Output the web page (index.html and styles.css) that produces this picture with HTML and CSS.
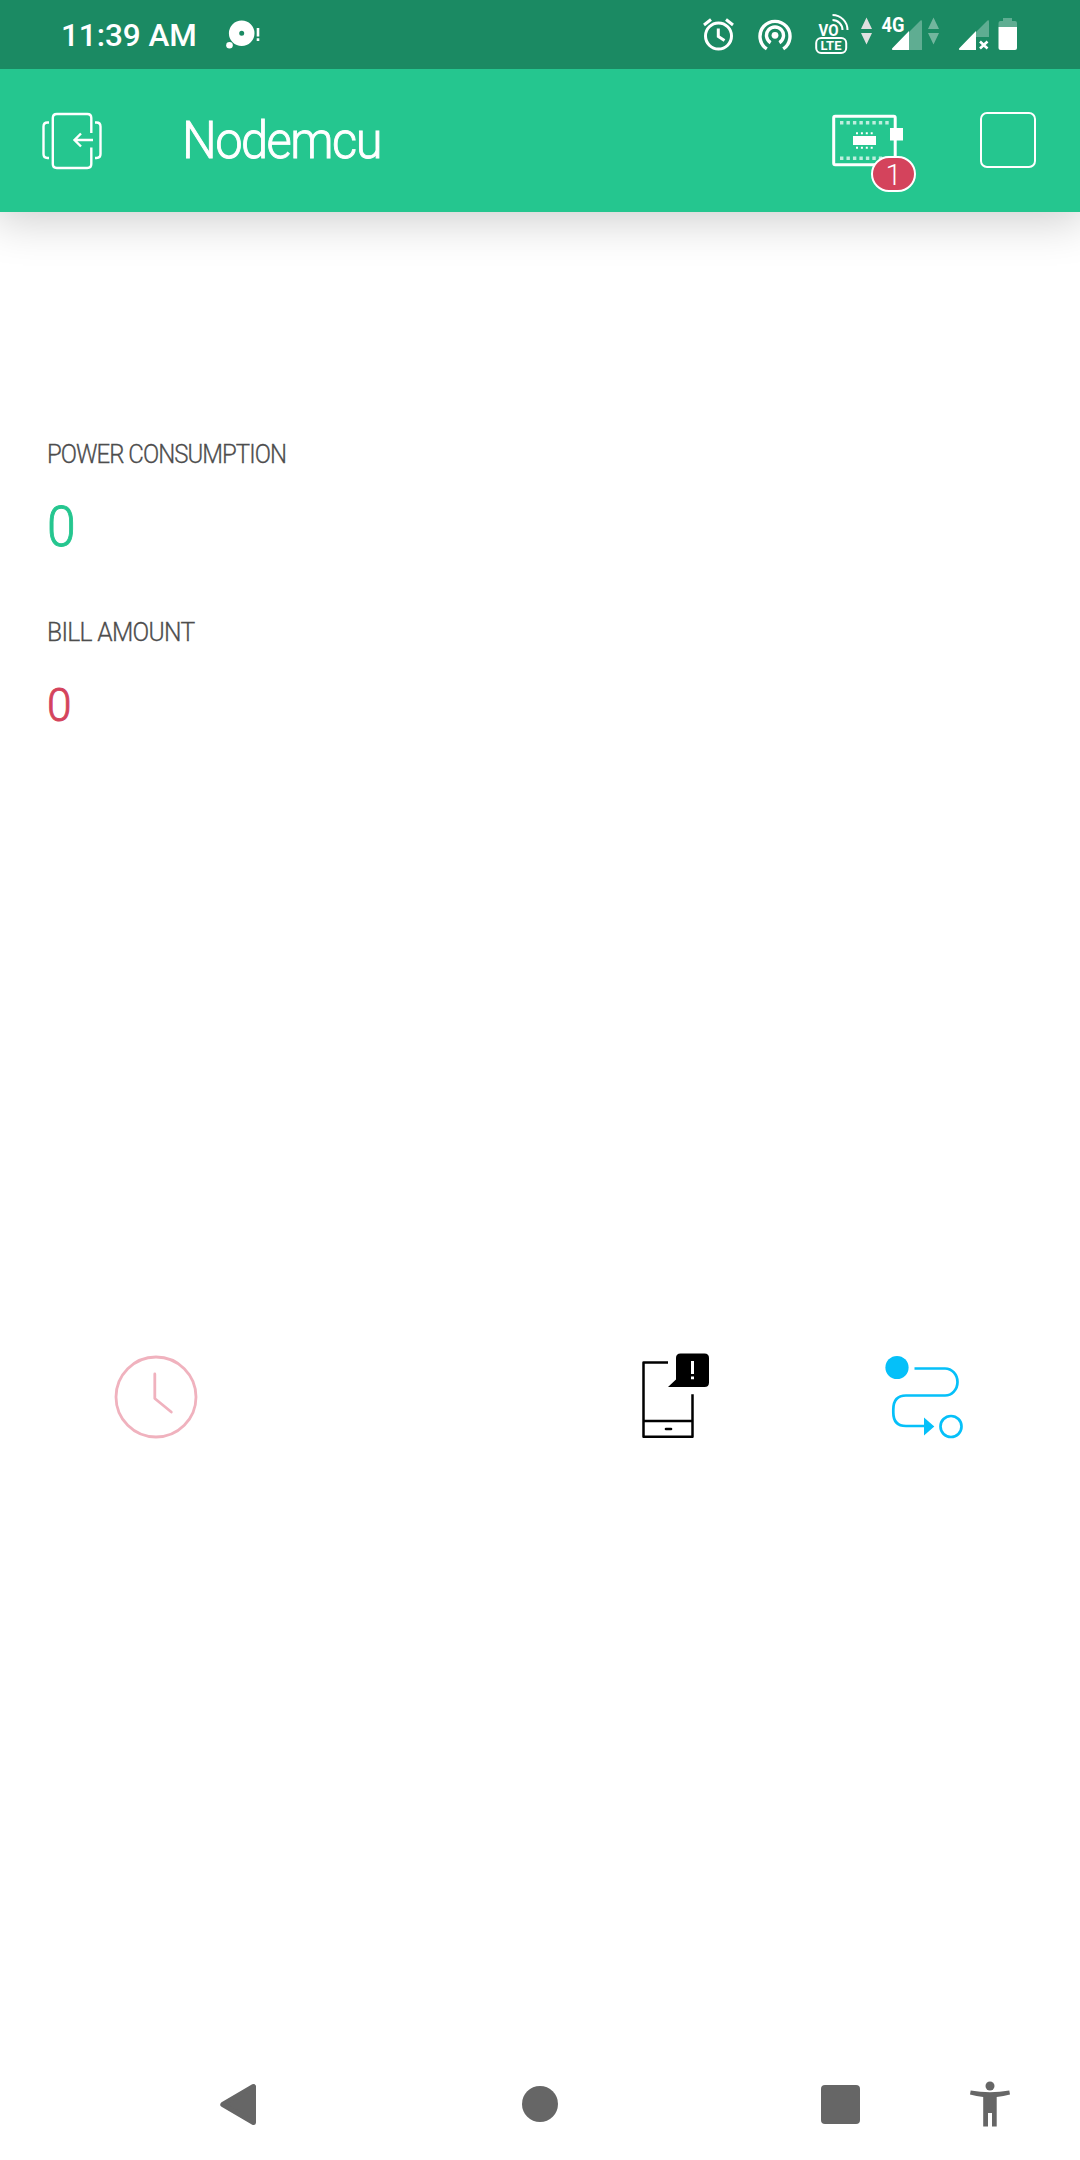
FILE: index.html
```html
<!DOCTYPE html>
<html lang="en">
<head>
<meta charset="utf-8">
<title>Nodemcu</title>
<link rel="stylesheet" href="styles.css">
</head>
<body>
<div class="screen">
  <div class="status">
    <span class="clock">11:39 AM</span>
    <svg class="notice" width="38" height="69" viewBox="224 0 38 69" fill="#fff"><path fill-rule="evenodd" d="M241.7 20.5a12.8 12.8 0 1 1 0 25.6a12.8 12.8 0 0 1 0-25.6m0 10.3a2.5 2.5 0 1 0 0 5a2.5 2.5 0 0 0 0-5"/><circle cx="229.5" cy="45.3" r="3.3"/><path d="M256.7 28h2.6v8.5h-2.6zM256.7 38.3h2.6v2.7h-2.6z"/></svg>
    <div class="indicators">
      <svg width="40" height="69" viewBox="700 0 40 69" fill="none" stroke="#fff" stroke-width="3"><circle cx="718.5" cy="36" r="13"/><path d="M704 25l7-5.5M733 25l-7-5.5M718.3 28.5v8l6.2 4"/></svg>
      <svg width="40" height="69" viewBox="755 0 40 69" fill="none" stroke="#fff" stroke-width="3.4"><circle cx="775" cy="35.3" r="3.4" fill="#fff" stroke="none"/><path d="M766.8 48.9a15 15 0 1 1 16.4 0M770.6 42.7a8.5 8.5 0 1 1 8.8 0"/></svg>
      <svg width="40" height="69" viewBox="812 0 40 69" fill="none" stroke="#fff" stroke-width="2"><rect x="816.2" y="38" width="30" height="15" rx="5"/><path d="M832.5 15a15 15 0 0 1 15 15M832.5 20a10 10 0 0 1 10 10"/><text class="vo" x="818.5" y="35.5" textLength="20" lengthAdjust="spacingAndGlyphs">VO</text><text class="lte" x="820.5" y="50.2" textLength="21">LTE</text></svg>
      <svg class="data" width="14" height="69" viewBox="860 0 14 69" fill="#e0e0e0"><path d="M861 29l5.5-11.5L872 29zM861 33h11l-5.5 11.5z"/></svg>
      <svg class="signal" width="44" height="69" viewBox="880 0 44 69" fill="#fff"><path opacity=".3" d="M909 32l11.5-11.5q1.5-.8 1.5 1V50h-13z"/><path d="M909 31v19h-16q-2-.5-.5-2z"/><text class="net" x="881.5" y="32" textLength="23" lengthAdjust="spacingAndGlyphs">4G</text></svg>
      <svg class="idle" width="14" height="69" viewBox="927 0 14 69" fill="#fff" opacity=".38"><path d="M928 29l5.5-11.5L939 29zM928 33h11l-5.5 11.5z"/></svg>
      <svg class="signal2" width="34" height="69" viewBox="957 0 34 69" fill="#fff"><path opacity=".3" d="M976 32l11.5-11.5q1.5-.8 1.5 1V37h-13z"/><path d="M976 31v19h-16q-2-.5-.5-2z"/><path d="M980 41.5l7.5 7M987.5 41.5l-7.5 7" stroke="#fff" stroke-width="2.6"/></svg>
      <svg class="battery" width="24" height="69" viewBox="996 0 24 69" fill="#fff"><path opacity=".3" d="M998.5 27v-4q0-2 2-2h2.500v-3h9v3h3q2 0 2 2v4z"/><path d="M998.5 27h18.5v21q0 2-2 2h-14.500q-2 0-2-2z"/></svg>
    </div>
  </div>

  <header class="bar">
    <svg class="back" width="64" height="143" viewBox="40 69 64 143" fill="none" stroke="#fff" stroke-width="2.4"><path d="M91.3 133V118q0-4-4-4H56.8q-4 0-4 4v46q0 4 4 4h30.5q4 0 4-4v-16.500M93 140H74.5M81 133.500l-6.500 6.500l6.500 6.500M49 122.500h-1.500q-4 0-4 4V154q0 4 4 4H49M95 122.500h1.500q4 0 4 4V154q0 4-4 4H95"/></svg>
    <h1 class="title">Nodemcu</h1>
    <div class="device">
      <svg width="76" height="143" viewBox="830 69 76 143" fill="#fff"><rect x="833.7" y="116.2" width="61.5" height="48.5" rx="1.5" fill="none" stroke="#fff" stroke-width="3"/><path d="M840 122.7h50M840 158.3h50" fill="none" stroke="#fff" opacity=".7" stroke-width="3.4" stroke-dasharray="3.4 3.07"/><path d="M853 136h23v9h-23zM890 128h13v12.5h-13z"/><path d="M856 133.3h18M856 147.7h18" fill="none" stroke="#fff" stroke-width="2" stroke-dasharray="2 2.9"/></svg>
      <span class="badge">1</span>
    </div>
    <span class="stop"></span>
  </header>

  <main class="board">
    <section class="metric power"><h2>POWER CONSUMPTION</h2><p class="value">0</p></section>
    <section class="metric bill"><h2>BILL AMOUNT</h2><p class="value">0</p></section>
    <div class="widgets">
      <svg width="86" height="90" viewBox="113 1350 86 90" fill="none" stroke="#f0b2be" stroke-width="2.8"><circle cx="156" cy="1397" r="40"/><path stroke-linecap="round" stroke-linejoin="round" d="M154.8 1374v24.500l16.500 13.500"/></svg>
      <svg class="alert" width="72" height="90" viewBox="640 1350 72 90"><path d="M668 1362.500h-24.500v74.300h49v-42.500M643.500 1421h49" fill="none" stroke="#000" stroke-width="2.500" stroke-linejoin="round"/><path d="M666 1429h5" stroke="#000" stroke-width="2.600" stroke-linecap="round"/><path d="M668 1387l8-7.500V1358q0-4.500 4.500-4.500H704.500q4.500 0 4.500 4.500v24.500q0 4.500-4.500 4.500z"/><path d="M691 1361h3v13h-3zM691 1376.500h3v2.800h-3z" fill="#fff"/></svg>
      <svg class="route" width="84" height="90" viewBox="882 1350 84 90" fill="none" stroke="#05c0f9" stroke-width="2.700"><circle cx="897" cy="1367.500" r="11.600" fill="#05c0f9" stroke="none"/><path d="M914.500 1368.500h30.500a12.500 13.500 0 0 1 0 27H906q-12.700 0-12.700 14v3q0 13.500 12.700 13.500h20"/><path d="M924 1417.500l10.300 9-10.300 9z" fill="#05c0f9" stroke="none"/><circle cx="951" cy="1426.500" r="10.500"/></svg>
    </div>
  </main>

  <nav class="nav">
    <svg width="38" height="112" viewBox="219 2048 38 112"><path d="M222.8 2104.500l30.700-18v36z" stroke="#666" stroke-width="5" stroke-linejoin="round" fill="#666"/></svg>
    <span class="home"></span>
    <span class="recent"></span>
    <svg class="access" width="42" height="112" viewBox="969 2048 42 112" fill="#666"><circle cx="990" cy="2086" r="4.500"/><path d="M970.700 2090.500q19.300 3.500 38.600 0l.7 4q-6.500 1.800-13.300 2.500v29.500h-4.700V2113h-4v13.500h-4.800V2097q-6.700-.7-13.200-2.500z"/></svg>
  </nav>
</div>
</body>
</html>
```
FILE: styles.css
```css
* { box-sizing: border-box; margin: 0; padding: 0; }
body { background: #fff; font-family: Roboto, sans-serif; }
svg { display: block; flex: none; }
.screen { width: 1080px; height: 2160px; display: flex; flex-direction: column; overflow: hidden; }

.status { height: 69px; background: #1b8a63; display: flex; align-items: center; padding: 0 60px 0 61px; }
.clock { width: 138px; color: #fff; font-size: 31.5px; font-weight: 500; line-height: 73px; letter-spacing: -.05px; white-space: nowrap; margin-top: 2px; }
.notice { margin-left: 25px; }
.indicators { display: flex; margin-left: auto; }
.indicators svg + svg { margin-left: 15px; }
.indicators svg:nth-child(3) { margin-left: 17px; }
.indicators svg.data { margin-left: 8px; }
.indicators svg.signal { margin-left: 6px; }
.indicators svg.idle { margin-left: 3px; }
.indicators svg.signal2 { margin-left: 16px; }
.indicators svg.battery { margin-left: 5px; }
.indicators text { fill: #fff; stroke: none; font-weight: 700; }
.vo { font-size: 16.5px; }
.lte { font-size: 13px; }
.net { font-size: 21px; }

.bar { height: 143px; background: #25c68f; display: flex; align-items: center; padding: 0 44px 0 40px; box-shadow: 0 2px 44px 6px rgba(0, 0, 0, .2); clip-path: inset(0 0 -60px 0); }
.title { width: 200px; margin-left: 78px; color: #fff; font-size: 52px; font-weight: 300; line-height: 143px; letter-spacing: -1.6px; transform: scaleX(.938); transform-origin: 0 0; -webkit-text-stroke: .9px #fff; }
.device { position: relative; margin-left: auto; margin-right: 74px; }
.badge { position: absolute; left: 41px; top: 87px; width: 45px; height: 36px; border: 2px solid #fff; border-radius: 18px; background: #d4435c; color: #fff; font-size: 29px; font-weight: 300; line-height: 34px; text-align: center; }
.stop { width: 56px; height: 56px; margin-top: -1px; border: 2px solid #fff; border-radius: 7px; }

.board { flex: 1; }
.metric { padding-left: 47px; }
.metric h2 { width: 300px; color: #4d4d4d; font-size: 25px; font-weight: 300; line-height: 30px; letter-spacing: -1px; transform: scaleX(.958); transform-origin: 0 0; -webkit-text-stroke: .3px #4d4d4d; }
.value { width: 60px; font-weight: 300; transform: scaleX(.94); transform-origin: 0 0; -webkit-text-stroke: .9px currentColor; }
.power { padding-top: 228px; height: 404px; }
.power .value { color: #25c68f; font-size: 55px; line-height: 60px; margin-top: 27px; }
.bill { height: 734px; padding-top: 2px; }
.metric.bill h2 { letter-spacing: -.7px; transform: scaleX(.985); }
.bill .value { color: #d4435c; font-size: 47px; line-height: 56px; margin-top: 29px; }
.widgets { display: flex; padding-left: 113px; }
.alert { margin-left: 441px; }
.route { margin-left: 170px; }

.nav { height: 112px; display: flex; align-items: center; padding-left: 219px; }
.home { width: 36px; height: 36px; border-radius: 50%; background: #666; margin-left: 265px; }
.recent { width: 39px; height: 39px; border-radius: 4px; background: #666; margin-left: 263px; }
.access { margin-left: 109px; }
```
